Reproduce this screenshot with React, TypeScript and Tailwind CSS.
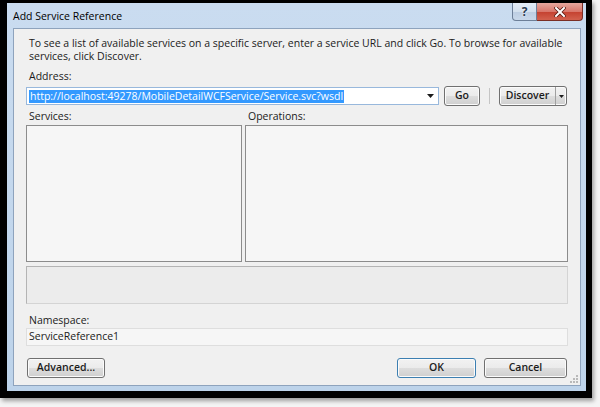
import React from 'react';

const btn =
  "h-[20px] flex items-center justify-center rounded-[3px] border border-[#707070] bg-[linear-gradient(to_bottom,#f2f2f2_0%,#ebebeb_50%,#dddddd_51%,#cfcfcf_100%)] shadow-[inset_0_0_0_1px_#fbfbfb] text-[10.5px] font-semibold text-[#1b1b1b]";

const App = () => {
  return (
    <div className="w-[600px] h-[407px] bg-[#f4f4f4] overflow-hidden font-['Open_Sans',sans-serif] text-[#1b1b1b]">
      <div className="w-[592px] h-[398px] bg-black pl-[7px] pt-[3px] pr-[6px] pb-[7px] shadow-[2px_3px_4px_rgba(0,0,0,0.35)]">
        <div className="h-full flex flex-col bg-[linear-gradient(to_bottom,#cadcf0,#bdd3ea)]">
          {/* Title bar */}
          <div className="h-[25px] flex items-start justify-between pl-[6px] pr-[3px]">
            <span className="mt-[6px] text-[10.5px] text-black">Add Service Reference</span>
            <div className="flex">
              <div className="w-[25px] h-[18px] flex items-center justify-center rounded-bl-[4px] border border-t-0 border-[#6d7f98] bg-[linear-gradient(to_bottom,#e4edf7_0%,#d3e0ee_50%,#bccde2_51%,#c9d8ea_100%)]">
                <span className="text-[12px] font-bold leading-none text-[#2a3a50] [text-shadow:0_0_2px_#fff]">?</span>
              </div>
              <div className="w-[46px] h-[18px] flex items-center justify-center rounded-br-[4px] border border-l-0 border-t-0 border-[#7a2e25] bg-[linear-gradient(to_bottom,#e6a79d_0%,#d9776b_50%,#c4402f_51%,#d2614e_100%)]">
                <svg width="12" height="10" viewBox="0 0 12 10">
                  <path d="M2 1 L10 9 M10 1 L2 9" stroke="#5a1a12" strokeWidth="3.6" strokeLinecap="square" />
                  <path d="M2 1 L10 9 M10 1 L2 9" stroke="#fff" strokeWidth="2" strokeLinecap="square" />
                </svg>
              </div>
            </div>
          </div>

          {/* Client area */}
          <div className="relative flex-1 ml-[6px] mr-[5px] mb-[5px] border border-[#8ea3bd] bg-[#f0f0f0] px-[12px] pt-[8px] flex flex-col text-[10.5px]">
            <p className="pl-[3px] leading-[12.5px]">
              To see a list of available services on a specific server, enter a service URL and click Go. To browse for available services, click Discover.
            </p>

            <div className="mt-[8px] pl-[3px] leading-[13px]">Address:</div>
            <div className="mt-[3px] flex items-center">
              <div className="w-[413px] h-[18px] flex items-center justify-between border border-[#98b8dc] bg-white pl-[2px] pr-[4px]">
                <span className="bg-[#3399ff] text-white leading-[13px] px-[1px]">
                  http://localhost:49278/MobileDetailWCFService/Service.svc?wsdl
                </span>
                <svg width="7" height="4" viewBox="0 0 7 4">
                  <path d="M0 0 H7 L3.5 4 Z" fill="#1b1b1b" />
                </svg>
              </div>
              <div className={btn + " ml-[5px] w-[36px]"}>Go</div>
              <div className="mx-[9px] w-px h-[16px] bg-[#c5c5c5]" />
              <div className={btn + " w-[68px] !justify-start"}>
                <span className="w-[55px] text-center">Discover</span>
                <span className="h-full w-px bg-[#a0a0a0]" />
                <svg className="ml-[3px]" width="5" height="3" viewBox="0 0 5 3">
                  <path d="M0 0 H5 L2.5 3 Z" fill="#1b1b1b" />
                </svg>
              </div>
            </div>

            <div className="mt-[4px] flex gap-[3px]">
              <div className="w-[216px] flex flex-col">
                <div className="pl-[3px] leading-[13px]">Services:</div>
                <div className="mt-[2px] h-[137px] border border-[#8c8c8c] bg-[#f6f6f6]" />
              </div>
              <div className="flex-1 flex flex-col">
                <div className="pl-[3px] leading-[13px]">Operations:</div>
                <div className="mt-[2px] h-[137px] border border-[#8c8c8c] bg-[#f6f6f6]" />
              </div>
            </div>

            <div className="mt-[4px] h-[38px] border border-[#d4d4d4] border-t-[#b4b4b4] border-l-[#b4b4b4] bg-[#ececec]" />

            <div className="mt-[10px] pl-[3px] leading-[13px]">Namespace:</div>
            <div className="mt-[1px] h-[18px] flex items-center border border-[#dedede] bg-[#f6f6f6] pl-[2px]">
              ServiceReference1
            </div>

            <div className="mt-[12px] flex items-center">
              <div className={btn + " ml-[1px] w-[78px]"}>Advanced...</div>
              <div className="flex-1" />
              <div className={btn + " w-[79px] !border-[#3c7fb1] shadow-[inset_0_0_0_1px_#a8d8f6]"}>OK</div>
              <div className={btn + " ml-[8px] mr-[1px] w-[83px]"}>Cancel</div>
            </div>

            {/* resize grip */}
            <svg className="absolute right-[1px] bottom-[1px]" width="9" height="9" viewBox="0 0 9 9">
              <g fill="#b9b9b9">
                <rect x="6" y="0" width="2" height="2" />
                <rect x="3" y="3" width="2" height="2" />
                <rect x="6" y="3" width="2" height="2" />
                <rect x="0" y="6" width="2" height="2" />
                <rect x="3" y="6" width="2" height="2" />
                <rect x="6" y="6" width="2" height="2" />
              </g>
            </svg>
          </div>
        </div>
      </div>
    </div>
  );
};

export default App;
